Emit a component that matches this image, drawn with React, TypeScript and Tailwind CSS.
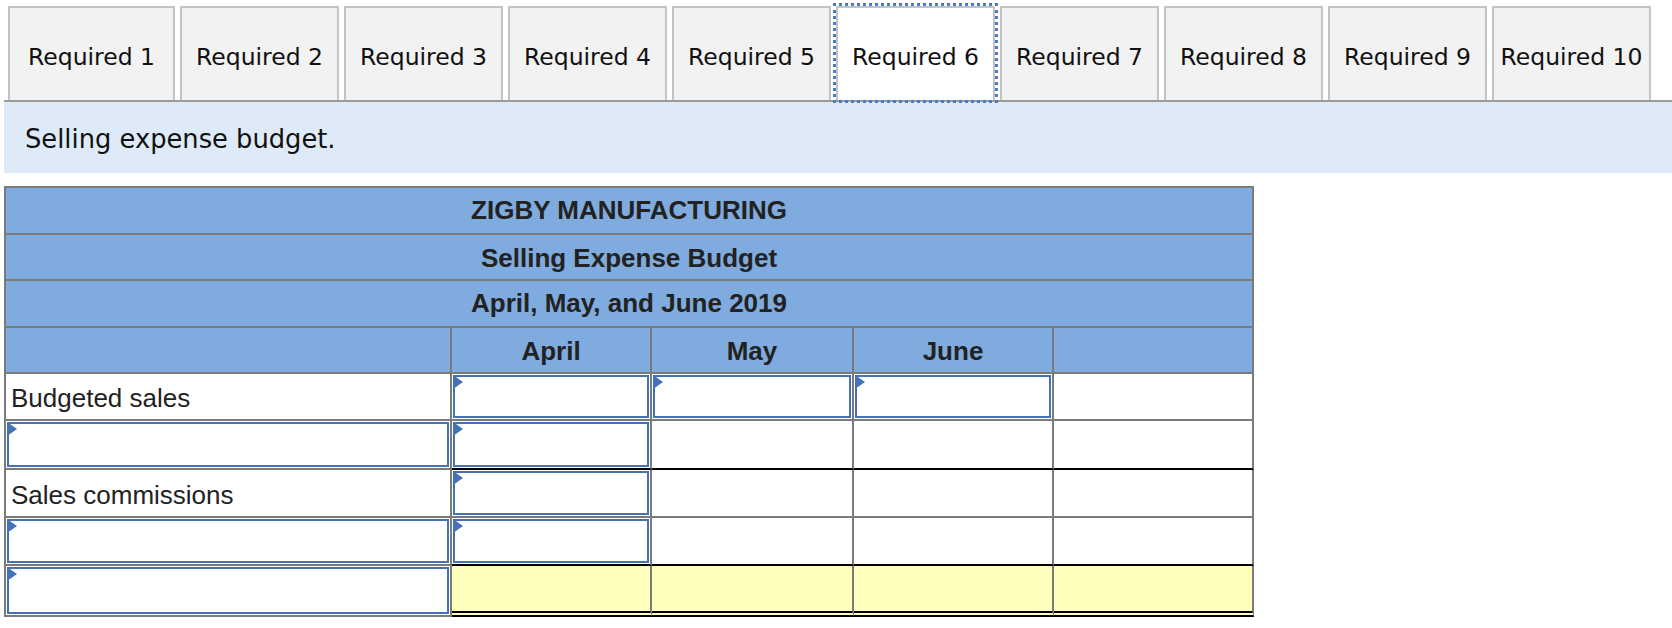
import React from "react";

const tabs = [
  "Required 1",
  "Required 2",
  "Required 3",
  "Required 4",
  "Required 5",
  "Required 6",
  "Required 7",
  "Required 8",
  "Required 9",
  "Required 10",
];

function Tri() {
  return (
    <svg className="absolute -left-[2px] -top-[2px]" width="10" height="14" viewBox="0 0 10 14">
      <polygon points="0,0 10,7 0,14" fill="#4472b6" />
    </svg>
  );
}

function InputBox() {
  return (
    <div className="relative h-full w-full border-2 border-[#4472b6] bg-white">
      <Tri />
    </div>
  );
}

type CellProps = {
  h: string;
  bottom?: "gray" | "black" | "double";
  yellow?: boolean;
  input?: boolean;
  children?: React.ReactNode;
};

function Cell({ h, bottom = "gray", yellow, input, children }: CellProps) {
  const border =
    bottom === "black"
      ? "border-r-2 border-b-2 border-r-[#7b7b7b] border-b-black"
      : bottom === "double"
      ? "border-r-2 border-b-[6px] border-double border-r-[#7b7b7b] border-b-black"
      : "border-r-2 border-b-2 border-[#7b7b7b]";
  const bg = yellow ? "bg-[#ffffbb]" : "bg-white";
  const pad = input ? "p-px" : "pl-[5px] pt-[4px] flex items-center";
  return (
    <div className={`${h} ${border} ${bg} ${pad}`}>
      {input ? <InputBox /> : children}
    </div>
  );
}

export default function App() {
  return (
    <div className="h-[628px] w-[1672px] overflow-hidden bg-white">
      {/* Tabs */}
      <div className="ml-[4px] flex items-end gap-[5px] border-b-2 border-[#9b9b9b] pl-[4px] pt-[6px] font-['DejaVu_Sans',Verdana,sans-serif] text-[23.5px] text-[#111]">
        {tabs.map((t, i) =>
          i === 5 ? (
            <div
              key={t}
              className="relative z-10 flex h-[94px] w-[159px] justify-center border-2 border-b-0 border-[#c3c3c3] bg-white pt-[32px] outline-[3px] outline-offset-0 outline-dotted outline-[#4a7bc4]"
            >
              {t}
            </div>
          ) : (
            <div
              key={t}
              className={`flex h-[94px] ${i === 0 ? "w-[167px]" : "w-[159px]"} justify-center border-2 border-b-0 border-[#c3c3c3] bg-[#f2f2f2] pt-[32px]`}
            >
              {t}
            </div>
          )
        )}
      </div>

      {/* Instruction band */}
      <div className="ml-[4px] h-[71px] bg-[#deeaf7] pl-[21px] pt-[22px] font-['DejaVu_Sans',Verdana,sans-serif] text-[25.75px] leading-[30px] text-[#111]">
        Selling expense budget.
      </div>

      {/* Table */}
      <div className="ml-[4px] mt-[13px] grid w-[1250px] grid-cols-[446px_200px_202px_200px_200px] border-l-2 border-t-2 border-[#7b7b7b] font-['Liberation_Sans',Arial,sans-serif] text-[26px] text-[#222]">
        <div className="col-span-5 flex h-[47px] items-center justify-center border-r-2 border-b-2 border-[#7b7b7b] bg-[#7fabde] font-bold">
          ZIGBY MANUFACTURING
        </div>
        <div className="col-span-5 flex h-[46px] items-center justify-center border-r-2 border-b-2 border-[#7b7b7b] bg-[#7fabde] pt-[2px] font-bold">
          Selling Expense Budget
        </div>
        <div className="col-span-5 flex h-[47px] items-center justify-center border-r-2 border-b-2 border-[#7b7b7b] bg-[#7fabde] font-bold">
          April, May, and June 2019
        </div>

        {["", "April", "May", "June", ""].map((c, i) => (
          <div
            key={i}
            className="flex h-[46px] items-center justify-center border-r-2 border-b-2 border-[#7b7b7b] bg-[#7fabde] pt-[2px] font-bold"
          >
            {c}
          </div>
        ))}

        {/* Row: Budgeted sales */}
        <Cell h="h-[47px]">Budgeted sales</Cell>
        <Cell h="h-[47px]" input />
        <Cell h="h-[47px]" input />
        <Cell h="h-[47px]" input />
        <Cell h="h-[47px]" />

        {/* Row: blank input */}
        <Cell h="h-[49px]" input />
        <Cell h="h-[49px]" input bottom="black" />
        <Cell h="h-[49px]" bottom="black" />
        <Cell h="h-[49px]" bottom="black" />
        <Cell h="h-[49px]" bottom="black" />

        {/* Row: Sales commissions */}
        <Cell h="h-[48px]">Sales commissions</Cell>
        <Cell h="h-[48px]" input />
        <Cell h="h-[48px]" />
        <Cell h="h-[48px]" />
        <Cell h="h-[48px]" />

        {/* Row: blank input */}
        <Cell h="h-[48px]" input />
        <Cell h="h-[48px]" input bottom="black" />
        <Cell h="h-[48px]" bottom="black" />
        <Cell h="h-[48px]" bottom="black" />
        <Cell h="h-[48px]" bottom="black" />

        {/* Total row */}
        <Cell h="h-[51px]" input />
        <Cell h="h-[51px]" yellow bottom="double" />
        <Cell h="h-[51px]" yellow bottom="double" />
        <Cell h="h-[51px]" yellow bottom="double" />
        <Cell h="h-[51px]" yellow bottom="double" />
      </div>
    </div>
  );
}
